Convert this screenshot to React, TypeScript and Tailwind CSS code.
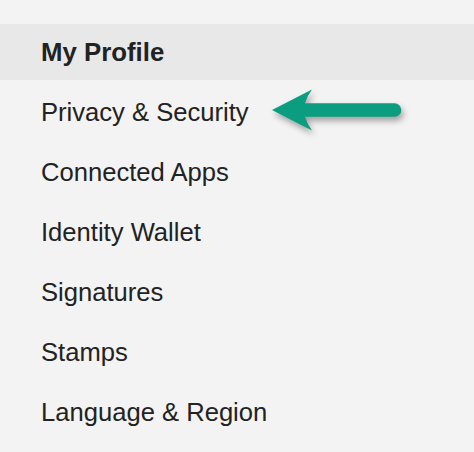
const items = [
  'My Profile',
  'Privacy & Security',
  'Connected Apps',
  'Identity Wallet',
  'Signatures',
  'Stamps',
  'Language & Region',
];

function Arrow() {
  return (
    <svg
      className="absolute left-[262px] top-[80px] h-[60px] w-[150px]"
      viewBox="0 0 150 60"
      style={{ filter: 'drop-shadow(2px 4px 3px rgba(0,0,0,0.35))' }}
    >
      <path
        d="M10 30 L50 9.5 Q45 16 43 23.2 L132.5 23.2 A6.8 6.8 0 0 1 132.5 36.8 L43 36.8 Q45 44 50 50.5 Z"
        fill="#0b9d7f"
      />
    </svg>
  );
}

export default function App() {
  return (
    <div className="relative h-[452px] w-[474px] overflow-hidden bg-[#f3f3f3] font-['Liberation_Sans',Arial,sans-serif] text-[#222]">
      <nav className="flex flex-col gap-1 pt-6">
        {items.map((label, i) => (
          <div
            key={label}
            className={
              i === 0
                ? 'flex h-14 items-center bg-[#e8e8e8] pl-[41px] text-[25.8px] font-bold'
                : 'flex h-14 items-center pl-[41px] text-[25.6px]'
            }
          >
            {label}
          </div>
        ))}
      </nav>
      <Arrow />
    </div>
  );
}
